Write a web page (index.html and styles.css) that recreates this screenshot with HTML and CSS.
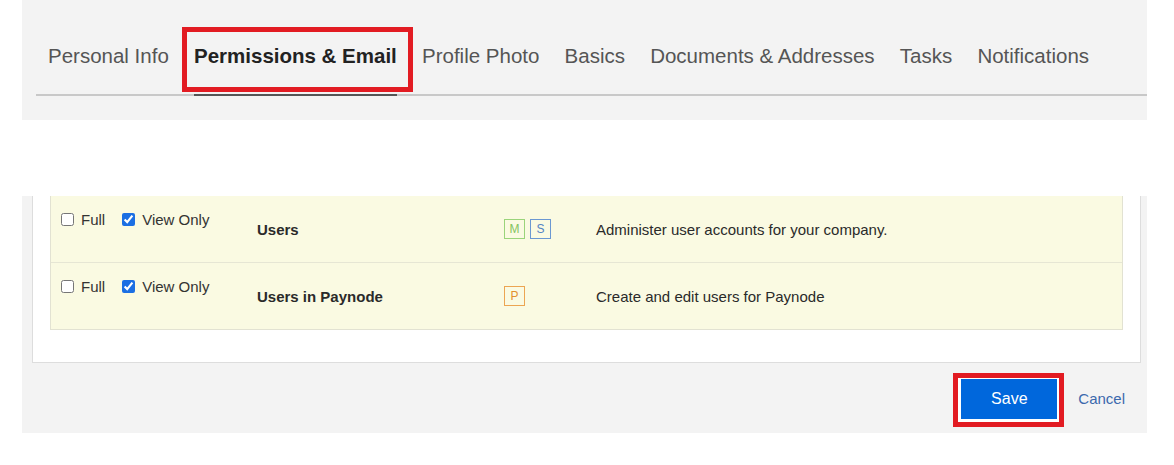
FILE: index.html
```html
<!DOCTYPE html>
<html lang="en">
<head>
    <meta charset="UTF-8">
    <meta name="viewport" content="width=device-width, initial-scale=1.0">
    <title>Permissions &amp; Email</title>
    <link rel="stylesheet" href="styles.css">
</head>
<body>
    <div class="page">
        <!-- tab bar -->
        <div class="tab-panel">
            <ul class="tabs">
                <li class="tab">Personal Info</li>
                <li class="tab active">Permissions &amp; Email</li>
                <li class="tab">Profile Photo</li>
                <li class="tab">Basics</li>
                <li class="tab">Documents &amp; Addresses</li>
                <li class="tab">Tasks</li>
                <li class="tab">Notifications</li>
            </ul>
        </div>

        <!-- permissions table -->
        <div class="form-panel">
            <div class="card">
                <div class="perm-table">
                    <div class="perm-row">
                        <div class="perm-access">
                            <label><input type="checkbox"> Full</label>
                            <label><input type="checkbox" checked> View Only</label>
                        </div>
                        <div class="perm-name">Users</div>
                        <div class="perm-badges">
                            <span class="badge badge-m">M</span>
                            <span class="badge badge-s">S</span>
                        </div>
                        <div class="perm-desc">Administer user accounts for your company.</div>
                    </div>
                    <div class="perm-row">
                        <div class="perm-access">
                            <label><input type="checkbox"> Full</label>
                            <label><input type="checkbox" checked> View Only</label>
                        </div>
                        <div class="perm-name">Users in Paynode</div>
                        <div class="perm-badges">
                            <span class="badge badge-p">P</span>
                        </div>
                        <div class="perm-desc">Create and edit users for Paynode</div>
                    </div>
                </div>
            </div>

            <div class="actions">
                <span class="highlight">
                    <button class="save-btn">Save</button>
                </span>
                <a href="#" class="cancel-link">Cancel</a>
            </div>
        </div>
    </div>
</body>
</html>
```

FILE: styles.css
```css
body {
    margin: 0;
    font-family: "Liberation Sans", Arial, sans-serif;
    background-color: #ffffff;
    color: #222222;
}
.page {
    width: 1125px;
    margin-left: 22px;
}

/* tabs */
.tab-panel {
    background-color: #f3f3f3;
    padding: 0 0 24px 14px;
}
.tabs {
    display: flex;
    list-style: none;
    margin: 0;
    padding: 0;
    border-bottom: 2px solid #c8c8c8;
}
.tab {
    position: relative;
    margin: 0 12.6px;
    padding: 44px 0 26px;
    font-size: 20.5px;
    line-height: 24px;
    color: #555555;
}
.tab:first-child {
    margin-left: 12px;
}
.tab.active {
    font-weight: bold;
    color: #222222;
    border-bottom: 2px solid #555555;
    margin-bottom: -2px;
}
.tab.active::after {
    content: "";
    position: absolute;
    top: 27px;
    left: -12px;
    right: -16px;
    height: 55px;
    border: 5px solid #e21b22;
}

/* form */
.form-panel {
    margin-top: 76px;
    background-color: #f3f3f3;
    padding: 0 6px 6px 10px;
}
.card {
    background-color: #ffffff;
    border-left: 1px solid #dddddd;
    border-right: 1px solid #dddddd;
    border-bottom: 1px solid #dddddd;
    padding: 0 17px 32px 17px;
}
.perm-table {
    background-color: #fafae2;
    border: 1px solid #e2e2d2;
    border-top: none;
}
.perm-row {
    display: grid;
    grid-template-columns: 206px 247px 92px 1fr;
    align-items: center;
    height: 66px;
    font-size: 15px;
    color: #2a2a2a;
}
.perm-row + .perm-row {
    border-top: 1px solid #e6e6d4;
}
.perm-access {
    align-self: start;
    display: flex;
    gap: 17px;
    padding: 15px 0 0 10px;
    color: #333333;
}
.perm-access label {
    display: flex;
    align-items: center;
    gap: 7px;
}
.perm-access input {
    width: 13px;
    height: 13px;
    margin: 0;
    accent-color: #1b6fe3;
}
.perm-name {
    font-weight: bold;
}
.perm-badges {
    display: flex;
    gap: 5px;
}
.badge {
    width: 19px;
    height: 18px;
    border: 1.5px solid;
    font-size: 12px;
    line-height: 18px;
    text-align: center;
}
.badge-m {
    border-color: #9ad47a;
    color: #84c45f;
}
.badge-s {
    border-color: #6b98d2;
    color: #5584c4;
}
.badge-p {
    border-color: #eca552;
    color: #e38f2c;
}

/* buttons */
.actions {
    display: flex;
    justify-content: flex-end;
    align-items: center;
    padding: 10px 16px 0 0;
}
.highlight {
    display: inline-block;
    border: 5px solid #e21b22;
    padding: 1px 2px 3px 3px;
    background-color: #ffffff;
}
.save-btn {
    display: block;
    width: 96px;
    height: 40px;
    padding: 0;
    background-color: #0067dc;
    color: #ffffff;
    border: none;
    font-family: "Liberation Sans", Arial, sans-serif;
    font-size: 16px;
    cursor: pointer;
}
.cancel-link {
    margin-left: 14px;
    font-size: 15px;
    color: #3b69ad;
    text-decoration: none;
    padding-bottom: 3px;
}
```
